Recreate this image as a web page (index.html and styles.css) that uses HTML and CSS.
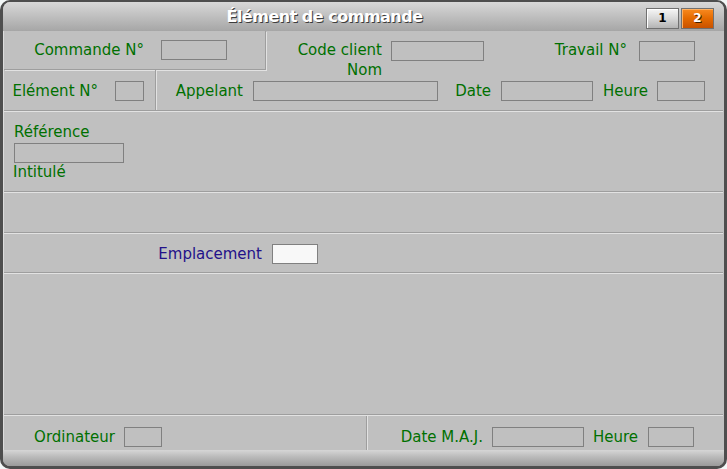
FILE: index.html
```html
<!DOCTYPE html>
<html lang="fr">
<head>
<meta charset="utf-8">
<title>Élément de commande</title>
<link rel="stylesheet" href="styles.css">
</head>
<body>
<div class="win">
  <div class="titlebar">
    <div class="title">Élément de commande</div>
    <div class="tabs">
      <span class="tab">1</span>
      <span class="tab active">2</span>
    </div>
  </div>
  <div class="main">
    <div class="rowA">
      <div class="cell cmd">
        <span class="lbl w140">Commande N°</span><span class="fld g17 w66"></span>
      </div>
      <div class="cell r1">
        <div class="r1top">
          <span class="lbl w116">Code client</span><span class="fld g9 w93"></span>
          <span class="lbl w143">Travail N°</span><span class="fld g12 w56"></span>
        </div>
        <div class="nom"><span class="lbl w116">Nom</span></div>
      </div>
      <div class="cell elem">
        <span class="lbl w94">Elément N°</span><span class="fld g17 w29"></span>
      </div>
      <div class="cell r2">
        <span class="lbl w87">Appelant</span><span class="fld g10 w185"></span>
        <span class="lbl w53">Date</span><span class="fld g10 w92"></span>
        <span class="lbl w55">Heure</span><span class="fld g9 w48"></span>
      </div>
    </div>
    <div class="sec secB">
      <span class="lbl">Référence</span>
      <span class="fld w110 ref"></span>
      <span class="lbl intit">Intitulé</span>
    </div>
    <div class="sec secC"></div>
    <div class="sec secD">
      <span class="lbl blue w258">Emplacement</span><span class="fld g10 w46 white"></span>
    </div>
    <div class="sec secE"></div>
    <div class="sec secF">
      <div class="fcell fleft">
        <span class="lbl w111">Ordinateur</span><span class="fld g9 w38"></span>
      </div>
      <div class="fcell fright">
        <span class="lbl w116">Date M.A.J.</span><span class="fld g9 w92"></span>
        <span class="lbl w54">Heure</span><span class="fld g10 w46"></span>
      </div>
    </div>
  </div>
  <div class="footer"></div>
</div>
</body>
</html>
```

FILE: styles.css
```css
* { box-sizing: border-box; }

body {
  margin: 0;
  background: #f3f7f7;
  font-family: "DejaVu Sans", "Liberation Sans", sans-serif;
}

.win {
  width: 727px;
  height: 469px;
  border: 3px solid #4e4e4e;
  border-top-width: 2px;
  border-radius: 10px;
  background: #c0c0c0;
  overflow: hidden;
  display: flex;
  flex-direction: column;
}

.titlebar {
  height: 29px;
  flex: none;
  display: flex;
  background: linear-gradient(#d8d8d8, #c4c4c4 40%, #a6a6a6);
}

.title {
  flex: 1;
  text-align: center;
  font-weight: bold;
  font-size: 16px;
  letter-spacing: -0.5px;
  line-height: 29px;
  color: #ffffff;
  text-shadow: 1px 1px 0 #3c3c3c;
}

.tabs {
  display: flex;
  gap: 2px;
  padding: 6px 10px 0 0;
}

.tab {
  width: 33px;
  height: 21px;
  border: 1px solid #707070;
  background: linear-gradient(#f6f6f6, #d8d8d8 50%, #b4b4b4);
  box-shadow: inset 1px 1px 0 #ffffff;
  text-align: center;
  font-size: 12px;
  font-weight: bold;
  line-height: 19px;
  color: #000;
}

.tab.active {
  background: linear-gradient(#f88a20, #e46a00 50%, #c85200);
  box-shadow: inset 1px 1px 0 #ffb060;
  color: #fff;
  text-shadow: 1px 1px 0 #402000;
}

.main {
  flex: 1;
  display: flex;
  flex-direction: column;
  border-left: 1px solid #dcdcdc;
  padding-right: 1px;
}

.lbl {
  display: inline-block;
  flex: none;
  font-size: 15px;
  line-height: 17px;
  color: #007000;
  white-space: nowrap;
  text-align: right;
}

.blue { color: #23118a; }

.fld {
  display: inline-block;
  flex: none;
  height: 20px;
  border: 1px solid #808080;
}

.white { background: #f8f8f8; }

.g9 { margin-left: 9px; }
.g10 { margin-left: 10px; }
.g12 { margin-left: 12px; }
.g17 { margin-left: 17px; }

.w29 { width: 29px; }
.w38 { width: 38px; }
.w46 { width: 46px; }
.w48 { width: 48px; }
.w53 { width: 53px; }
.w54 { width: 54px; }
.w55 { width: 55px; }
.w56 { width: 56px; }
.w66 { width: 66px; }
.w87 { width: 87px; }
.w92 { width: 92px; }
.w93 { width: 93px; }
.w94 { width: 94px; }
.w110 { width: 110px; }
.w111 { width: 111px; }
.w116 { width: 116px; }
.w140 { width: 140px; }
.w143 { width: 143px; }
.w185 { width: 185px; }
.w258 { width: 258px; }

/* top block */
.rowA {
  height: 80px;
  flex: none;
  display: grid;
  grid-template-columns: 152px 110px 1fr;
  grid-template-rows: 39px 40px;
  border-bottom: 1px solid #9e9e9e;
}

.cell {
  display: flex;
  align-items: center;
}

.cmd {
  grid-column: 1 / 3;
  grid-row: 1;
  border-right: 1px solid #9e9e9e;
  border-bottom: 1px solid #9e9e9e;
  box-shadow: 1px 1px 0 #e2e2e2;
}

.r1 {
  grid-column: 3;
  grid-row: 1;
  flex-direction: column;
  align-items: stretch;
}

.r1top {
  height: 39px;
  flex: none;
  display: flex;
  align-items: center;
}

.nom {
  margin-top: -8px;
  display: flex;
}

.nom .lbl { line-height: 16px; }

.elem {
  grid-column: 1;
  grid-row: 2;
  border-right: 1px solid #9e9e9e;
  box-shadow: 1px 0 0 #e2e2e2;
  padding-top: 2px;
}

.r2 {
  grid-column: 2 / 4;
  grid-row: 2;
  padding-top: 2px;
}

/* sections */
.sec {
  flex: none;
  border-top: 1px solid #e2e2e2;
  border-bottom: 1px solid #9e9e9e;
}

.secB {
  height: 81px;
  display: flex;
  flex-direction: column;
  align-items: flex-start;
  padding: 12px 0 0 10px;
}

.secB .lbl { text-align: left; }

.ref { margin-top: 2px; }

.intit { margin-left: -1px; margin-top: 1px; }

.secC { height: 41px; }

.secD {
  height: 40px;
  display: flex;
  align-items: center;
  padding-top: 2px;
}

.secE { height: 142px; }

.secF {
  height: 35px;
  border-bottom: none;
  display: flex;
}

.fcell {
  display: flex;
  align-items: flex-start;
  padding-top: 11px;
}

.fcell .lbl { line-height: 20px; }

.fleft {
  width: 363px;
  border-right: 1px solid #9e9e9e;
  box-shadow: 1px 0 0 #e2e2e2;
}

.fright { flex: 1; }

.footer {
  height: 16px;
  flex: none;
  background: linear-gradient(#d6d6d6, #bcbcbc 40%, #9a9a9a);
}
```
